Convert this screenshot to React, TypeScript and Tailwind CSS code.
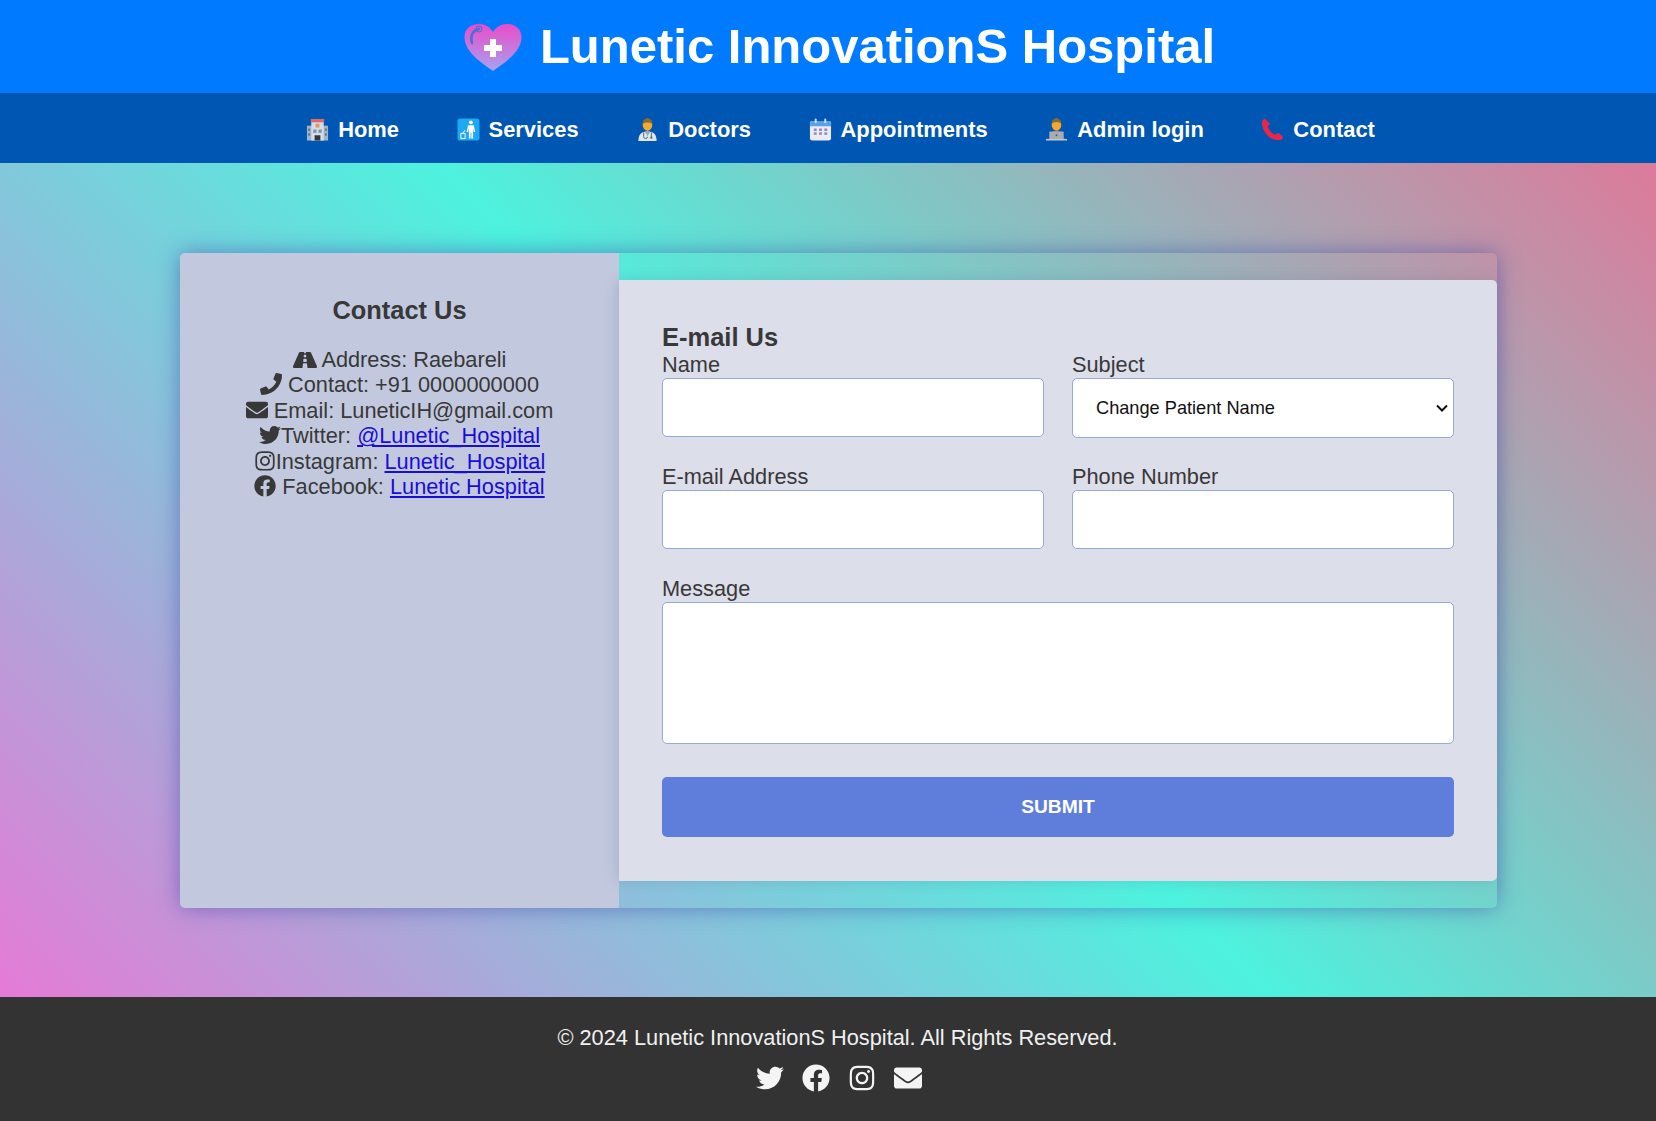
import React from "react";
import { FaRoad, FaPhone, FaEnvelope, FaTwitter, FaInstagram, FaFacebook } from "react-icons/fa";

const Hospital = () => (
  <svg viewBox="0 0 24 24" className="w-[23px] h-[23px]">
    <rect x="1" y="8" width="22" height="15.500" fill="#9fb4c6" />
    <rect x="5.500" y="2" width="13" height="21.500" fill="#d5dde4" />
    <rect x="5" y="1" width="14" height="3.500" fill="#dd6a6a" />
    <rect x="10" y="6" width="4" height="4" fill="#e8956a" />
    <rect x="9" y="18" width="6" height="5.500" fill="#31373d" />
    <rect x="2.300" y="11" width="2" height="2.500" fill="#55779a" />
    <rect x="2.300" y="16" width="2" height="2.500" fill="#55779a" />
    <rect x="19.700" y="11" width="2" height="2.500" fill="#55779a" />
    <rect x="19.700" y="16" width="2" height="2.500" fill="#55779a" />
    <rect x="7.500" y="12" width="3.500" height="3.500" fill="#7f93b5" />
    <rect x="13" y="12" width="3.500" height="3.500" fill="#7f93b5" />
  </svg>
);
const Litter = () => (
  <svg viewBox="0 0 24 24" className="w-[23px] h-[23px]">
    <rect x="0.500" y="0.500" width="23" height="23" rx="3" fill="#1ea7f2" />
    <circle cx="14.500" cy="4.500" r="2" fill="#fff" />
    <path d="M11.500 7.500h6l1.500 7h-1.500l-.7-4v11h-1.800v-6h-.8v6h-1.800V10.500l-.9 4H10z" fill="#fff" />
    <path d="M4 16h4.500v5.500H4z" fill="none" stroke="#fff" strokeWidth="1" />
    <path d="M6 16l2.500-3.500" stroke="#fff" strokeWidth="1" />
  </svg>
);
const Doctor = () => (
  <svg viewBox="0 0 24 24" className="w-[23px] h-[23px]">
    <path d="M2.500 24c0-7 3-10 9.500-10s9.500 3 9.500 10z" fill="#dfe7ee" />
    <path d="M9 14h6l-3 5z" fill="#8fb0c8" />
    <ellipse cx="12" cy="7" rx="5" ry="6.500" fill="#f4a92f" />
    <path d="M7 6.500C6.500-1.500 17.500-1.500 17 6.500c-1-2.500-9-2.500-10 0z" fill="#8a6a2d" />
    <path d="M8 15v4.500a2 2 0 0 0 4 0m4-4.500v5" fill="none" stroke="#567" strokeWidth="1" />
    <circle cx="16" cy="20.500" r="1.200" fill="#567" />
  </svg>
);
const Calendar = () => (
  <svg viewBox="0 0 24 24" className="w-[23px] h-[23px]">
    <rect x="1" y="3" width="22" height="20.500" rx="2.500" fill="#ecebf4" />
    <path d="M1 8.500v-3A2.500 2.500 0 0 1 3.500 3h17A2.500 2.500 0 0 1 23 5.500v3z" fill="#5ca0e6" />
    <rect x="6" y="0.500" width="2" height="5" rx="1" fill="#cfe4f7" />
    <rect x="16" y="0.500" width="2" height="5" rx="1" fill="#cfe4f7" />
    <g fill="#8f88b5">
      <rect x="5" y="11" width="3" height="2.500" /><rect x="10.500" y="11" width="3" height="2.500" /><rect x="16" y="11" width="3" height="2.500" />
      <rect x="5" y="15" width="3" height="2.500" /><rect x="10.500" y="15" width="3" height="2.500" /><rect x="16" y="15" width="3" height="2.500" />
    </g>
  </svg>
);
const Tech = () => (
  <svg viewBox="0 0 24 24" className="w-[23px] h-[23px]">
    <ellipse cx="12" cy="7" rx="5" ry="6.500" fill="#f4a92f" />
    <path d="M7 6.500C6.500-1.500 17.500-1.500 17 6.500c-1-3-9-3-10 0z" fill="#8a6a2d" />
    <path d="M4.500 22c0-6 3-9 7.500-9s7.500 3 7.500 9z" fill="#77777b" />
    <rect x="4.500" y="14" width="15" height="8.500" rx="1" fill="#a9adb3" />
    <rect x="1" y="21.800" width="22" height="1.700" fill="#c3c6ca" />
    <circle cx="12" cy="18" r="1" fill="#555" />
  </svg>
);
const Receiver = () => (
  <svg viewBox="0 0 24 24" className="w-[23px] h-[23px]">
    <path d="M4 .5C2 1.500.5 3.500 1 6.500c.8 5.500 4 11 8.500 14 3 2 7.500 3 10.500 2.500 2-.5 3-2 3-3.500l-5-4-3.500 2c-3-1-6.500-5.500-7.500-9l2.500-2.500z" fill="#e8264a" />
  </svg>
);
const Heart = () => (
  <svg viewBox="0 0 60 50" className="w-[60px] h-[50px]">
    <defs>
      <linearGradient id="heartFill" x1="0" y1="0" x2="0" y2="1">
        <stop offset="0" stopColor="#ea4cc8" />
        <stop offset="1" stopColor="#a6a2f0" />
      </linearGradient>
    </defs>
    <path d="M30 49C12 37 1.500 27 1.500 15 1.500 7 8 2 16 2c6 0 11 3 14 8 3-5 8-8 14-8 8 0 14.500 5 14.500 13 0 12-10.500 22-28.500 34z" fill="url(#heartFill)" />
    <path d="M9 21c-2-7 1-13 7-14" fill="none" stroke="#3f72d8" strokeWidth="2.500" strokeLinecap="round" />
    <circle cx="16" cy="7" r="3" fill="none" stroke="#3f72d8" strokeWidth="1" />
    <path d="M27 17h6v6h6v6h-6v6h-6v-6h-6v-6h6z" fill="#fff" />
  </svg>
);

const navItems = [
  { label: "Home", icon: <Hospital /> },
  { label: "Services", icon: <Litter /> },
  { label: "Doctors", icon: <Doctor /> },
  { label: "Appointments", icon: <Calendar /> },
  { label: "Admin login", icon: <Tech /> },
  { label: "Contact", icon: <Receiver /> },
];

const fieldCls = "block w-full h-[59px] bg-white border border-[#98a8dd] rounded-[5px] outline-none";

export default function App() {
  return (
    <div className="min-h-[1121px] flex flex-col font-['Liberation_Sans',Arial,sans-serif]">
      <header className="h-[93px] bg-[#007bff] flex items-center justify-center gap-[17px] pl-[22px] text-white">
        <Heart />
        <h1 className="text-[49px] font-bold leading-none">Lunetic InnovationS Hospital</h1>
      </header>
      <nav className="h-[70px] bg-[#0056b3] flex items-center justify-center gap-[57.6px] pl-[25px] pt-[4px] text-white">
        {navItems.map((n) => (
          <a key={n.label} className="flex items-center gap-[9px] text-[21.9px] font-bold">
            {n.icon}
            {n.label}
          </a>
        ))}
      </nav>
      <main className="h-[834px] flex items-start justify-center pt-[90px] pl-[21px] bg-[linear-gradient(45deg,#e57ad6_0%,#4df2de_51%,#dd7a9a_100%)]">
        <div className="w-[1317px] h-[655px] flex items-center rounded-[5px] shadow-[0_0_22px_rgba(60,70,170,0.55)]">
          <aside className="w-[439px] h-full bg-[#c2c9df] rounded-l-[5px] pt-[42px] text-center text-[#383838] text-[21.76px] leading-[25.4px]">
            <h2 className="text-[25.4px] font-bold leading-[30px] mb-[22px]">Contact Us</h2>
            <p><FaRoad className="inline align-[-4.5px] text-[24px]" /> Address: Raebareli</p>
            <p><FaPhone className="inline align-[-3px] text-[22px]" /> Contact: +91 0000000000</p>
            <p><FaEnvelope className="inline align-[-3px] text-[22px]" /> Email: LuneticIH@gmail.com</p>
            <p><FaTwitter className="inline align-[-3px] text-[22px]" />Twitter: <a className="text-[#1a0dd8] underline">@Lunetic_Hospital</a></p>
            <p><FaInstagram className="inline align-[-3px] text-[22px]" />Instagram: <a className="text-[#1a0dd8] underline">Lunetic_Hospital</a></p>
            <p><FaFacebook className="inline align-[-3px] text-[22px]" /> Facebook: <a className="text-[#1a0dd8] underline">Lunetic Hospital</a></p>
          </aside>
          <section className="flex-1 h-[601px] bg-[#dcdeea] rounded-r-[5px] px-[43px] pt-[42px] text-[#383838] text-[21.76px] shadow-[-3px_0_14px_rgba(80,90,140,0.2)]">
            <h3 className="text-[25.5px] font-bold leading-[30px]">E-mail Us</h3>
            <div className="grid grid-cols-2 gap-x-[28px]">
              <div className="h-[112px]">
                <label className="block leading-[26px]">Name</label>
                <input className={fieldCls} />
              </div>
              <div className="h-[112px]">
                <label className="block leading-[26px]">Subject</label>
                <div className="relative">
                  <select className="block w-full h-[60px] bg-white border border-[#98a8dd] rounded-[5px] outline-none appearance-none px-[23px] pt-[1px] text-[18.2px] text-[#111]">
                    <option>Change Patient Name</option>
                  </select>
                  <svg viewBox="0 0 12 8" className="absolute right-[6px] top-[26px] w-[12px] h-[8px] pointer-events-none">
                    <path d="M1 1.500l5 5 5-5" fill="none" stroke="#111" strokeWidth="2" />
                  </svg>
                </div>
              </div>
              <div className="h-[112px]">
                <label className="block leading-[26px]">E-mail Address</label>
                <input className={fieldCls} />
              </div>
              <div className="h-[112px]">
                <label className="block leading-[26px]">Phone Number</label>
                <input className={fieldCls} />
              </div>
            </div>
            <label className="block leading-[26px]">Message</label>
            <textarea className="block w-full h-[142px] bg-white border border-[#98a8dd] rounded-[5px] outline-none resize-none" />
            <button className="mt-[33px] w-full h-[60px] bg-[#5f7edb] rounded-[5px] text-white font-bold text-[19.2px]">SUBMIT</button>
          </section>
        </div>
      </main>
      <footer className="h-[124px] bg-[#333] text-white text-center pt-[28px]">
        <p className="text-[21.76px] leading-[25px] text-[#f0f0f0] pl-[19px]">© 2024 Lunetic InnovationS Hospital. All Rights Reserved.</p>
        <div className="flex justify-center items-center gap-[18px] mt-[14px] text-[28px] text-[#f4f4f4] pl-[21px]">
          <FaTwitter /><FaFacebook /><FaInstagram /><FaEnvelope />
        </div>
      </footer>
    </div>
  );
}
